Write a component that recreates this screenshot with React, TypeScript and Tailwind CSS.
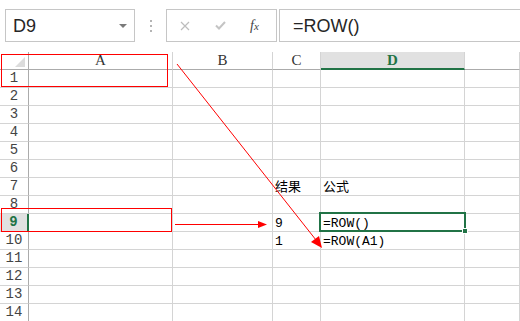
const COLS = [
  { key: 'A', w: 'w-[144px]' },
  { key: 'B', w: 'w-[100px]' },
  { key: 'C', w: 'w-[48px]' },
  { key: 'D', w: 'w-[144px]' },
  { key: 'E', w: 'flex-1' },
];

const CELLS: Record<string, string> = {
  C7: '结果',
  D7: '公式',
  C9: '9',
  D9: '=ROW()',
  C10: '1',
  D10: '=ROW(A1)',
};

const cellFont = "font-['Liberation_Mono','Noto_Sans_CJK_SC',monospace]";
const headFont = "font-['Liberation_Serif','Noto_Sans_CJK_SC',serif]";

function FormulaBar() {
  return (
    <div className="flex h-[52px] items-start bg-white pl-[5px] pt-[9px] font-['Liberation_Sans',Arial,sans-serif]">
      <div className="flex h-[33px] w-[130px] items-center border border-[#c6c6c6] pl-[7px]">
        <span className="text-[18px] leading-none text-[#262626]">D9</span>
        <span className="ml-auto mr-[7px] h-0 w-0 border-l-[4px] border-r-[4px] border-t-[4px] border-l-transparent border-r-transparent border-t-[#7a7a7a]" />
      </div>
      <div className="flex h-[33px] w-[31px] flex-col items-center justify-center gap-[3px]">
        <span className="h-[2px] w-[2px] bg-[#b4b4b4]" />
        <span className="h-[2px] w-[2px] bg-[#b4b4b4]" />
        <span className="h-[2px] w-[2px] bg-[#b4b4b4]" />
      </div>
      <div className="flex h-[33px] w-[111px] items-center border border-[#c6c6c6]">
        <svg className="ml-[13px]" width="10" height="10" viewBox="0 0 10 10">
          <path d="M1 1 L9 9 M9 1 L1 9" stroke="#bdbdbd" strokeWidth="1.2" fill="none" />
        </svg>
        <svg className="ml-[25px]" width="11" height="9" viewBox="0 0 11 9">
          <path d="M1 4.5 L4 7.5 L10 1" stroke="#c4c4c4" strokeWidth="2" fill="none" />
        </svg>
        <span className="ml-[24px] font-['Liberation_Serif',serif] text-[14px] italic leading-none text-[#444]">
          f<span className="text-[11px]">x</span>
        </span>
      </div>
      <div className="ml-[2px] flex h-[33px] flex-1 items-center border-y border-l border-[#c6c6c6] pl-[13px]">
        <span className="text-[18px] leading-none text-[#262626]">=ROW()</span>
      </div>
    </div>
  );
}

function HeaderRow() {
  return (
    <div className={`flex h-[18px] ${headFont}`}>
      <div className="relative w-[29px] border-b border-r border-[#ababab] bg-white">
        <svg className="absolute bottom-[2px] right-[3px]" width="10" height="10" viewBox="0 0 10 10">
          <polygon points="10,0 10,10 0,10" fill="#dcdcdc" />
        </svg>
      </div>
      {COLS.map((c) =>
        c.key === 'D' ? (
          <div
            key={c.key}
            className={`${c.w} flex items-center justify-center border-b-2 border-r border-b-[#217346] border-r-[#d4d4d4] bg-[#e1e1e1] text-[15px] font-bold text-[#217346]`}
          >
            {c.key}
          </div>
        ) : (
          <div
            key={c.key}
            className={`${c.w} flex items-center justify-center border-b border-r border-b-[#ababab] border-r-[#d4d4d4] text-[15px] text-[#333]`}
          >
            {c.key === 'E' ? '' : c.key}
          </div>
        )
      )}
    </div>
  );
}

function Row({ n }: { n: number }) {
  const active = n === 9;
  return (
    <div className={`flex h-[18px] ${cellFont}`}>
      <div
        className={
          active
            ? 'flex w-[29px] items-center justify-center border-b border-r-2 border-b-[#d4d4d4] border-r-[#217346] bg-[#e1e1e1] text-[14px] font-bold text-[#217346]'
            : 'flex w-[29px] items-center justify-center border-b border-r border-b-[#d4d4d4] border-r-[#ababab] text-[14px] text-[#444]'
        }
      >
        {n}
      </div>
      {COLS.map((c) => (
        <div
          key={c.key}
          className={`${c.w} flex items-end overflow-hidden whitespace-nowrap border-b border-r border-[#d4d4d4] pb-[1px] pl-[2px] text-[13px] leading-none text-black`}
        >
          {CELLS[`${c.key}${n}`] ?? ''}
        </div>
      ))}
    </div>
  );
}

function Annotations() {
  return (
    <svg className="pointer-events-none absolute inset-0" width="520" height="321" viewBox="0 0 520 321">
      <rect x="1.5" y="54.5" width="166" height="32" fill="none" stroke="#ff0000" strokeWidth="1" />
      <rect x="1.5" y="208.5" width="170" height="23" fill="none" stroke="#ff0000" strokeWidth="1" />
      <line x1="175" y1="224.5" x2="259" y2="224.5" stroke="#ff0000" strokeWidth="1" />
      <polygon points="258,221 267,224.5 258,228" fill="#ff0000" />
      <line x1="177" y1="64" x2="316" y2="240" stroke="#ff0000" strokeWidth="1" />
      <polygon points="322,248 311,242 319,236" fill="#ff0000" />
    </svg>
  );
}

export default function App() {
  const rows = Array.from({ length: 14 }, (_, i) => i + 1);
  return (
    <div className="relative h-[321px] w-[520px] overflow-hidden bg-white">
      <FormulaBar />
      <HeaderRow />
      {rows.map((n) => (
        <Row key={n} n={n} />
      ))}
      {/* active cell D9 */}
      <div className="pointer-events-none absolute left-[319px] top-[212px] h-[20px] w-[147px] border-2 border-[#217346]" />
      <div className="pointer-events-none absolute left-[462px] top-[228px] h-[6px] w-[6px] border border-white bg-[#217346]" />
      <Annotations />
    </div>
  );
}
